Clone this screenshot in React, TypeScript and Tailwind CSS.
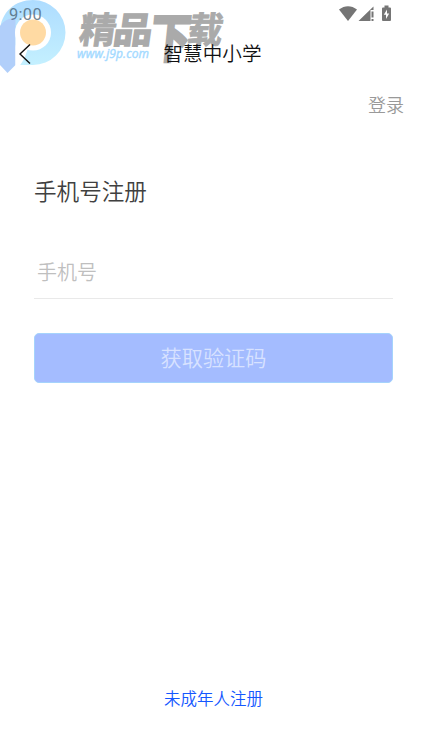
function Watermark() {
  return (
    <div className="pointer-events-none absolute left-0 top-0 h-20 w-60" aria-hidden="true">
      <svg className="h-20 w-60 overflow-visible" viewBox="0 0 240 80" fill="none">
        <defs>
          <linearGradient id="ring" x1="0" y1="0" x2="0" y2="1">
            <stop offset="0" stopColor="#aedcff" />
            <stop offset="1" stopColor="#c4f0ff" />
          </linearGradient>
        </defs>
        <path d="M0 31C1 12 15 0 33 0a32.500 32.500 0 0 1 0 65H19.500L15.500 45L0 58Z" fill="url(#ring)" />
        <path d="M0 26C4 20 10 18 15.500 18V65L7.500 73L0 65Z" fill="#b1cffa" />
        <circle cx="33" cy="32.500" r="18" fill="#fff" />
        <path d="M15.500 31V66H19.500C23.500 61 26 55 28 48Z" fill="#fff" />
        <circle cx="33" cy="32.500" r="13" fill="#ffdaa3" />
        <g fill="#aaa" stroke="#aaa" strokeWidth=".9" fontWeight="700" fontFamily="'Noto Sans CJK SC', sans-serif">
          <text transform="translate(78 43) skewX(-8) scale(1.020 1)" fontSize="36">精</text>
          <text transform="translate(112 43) skewX(-8) scale(1.090 1)" fontSize="36" strokeWidth="1.400">品</text>
          <text transform="translate(149 56.500) skewX(-6) scale(1.090 1.450)" fontSize="36" strokeWidth="2.200">下</text>
          <text transform="translate(186 43) skewX(-8) scale(.980 1)" fontSize="36">载</text>
        </g>
        <text x="77" y="58" fill="#a4daff" stroke="#a4daff" strokeWidth=".4" fontSize="12" fontWeight="500" fontStyle="italic" textLength="72" fontFamily="'Open Sans', sans-serif">
          www.j9p.com
        </text>
      </svg>
    </div>
  );
}

function StatusBar() {
  return (
    <div className="flex h-7 items-center justify-between pl-[9px] pr-8 text-[#757575]">
      <span className="relative z-10 pt-0.5 font-[Roboto] text-[16.500px] font-normal tracking-[0.3px] text-[#4b6578]/80">9:00</span>
      <svg className="h-5 w-[56px]" viewBox="0 0 56 20" fill="currentColor">
        <path d="M2 5.500C7.500 1 14.500 1 20 5.500L11 17Z" />
        <path d="M36.500 2.500V6H33.500V17H21.500ZM34.500 7.500h2v6h-2ZM34.500 15h2v2h-2Z" />
        <path fillRule="evenodd" d="M47.500 1.500h4v2h1.500q1 0 1 1V16q0 1-1 1h-7q-1 0-1-1V4.500q0-1 1-1h1.500ZM50 5.500l-3.200 5.200h2.200v4.300l3.200-5.500H50Z" />
      </svg>
    </div>
  );
}

export default function App() {
  return (
    <div className="relative flex h-[756px] w-[425px] flex-col overflow-hidden bg-white font-['Noto_Sans_CJK_SC',sans-serif] font-[350]">
      <Watermark />
      <StatusBar />
      <header className="relative flex h-[52px] items-center justify-center">
        <button className="absolute left-[18px] top-4" aria-label="返回">
          <svg className="h-5 w-[13px]" viewBox="0 0 13 20" fill="none" stroke="#111" strokeWidth="1.400">
            <path d="M12 .5L2 10L12 19.500" />
          </svg>
        </button>
        <h1 className="pb-0.5 text-[19.600px] leading-[50px] text-[#111]">智慧中小学</h1>
      </header>
      <div className="flex h-12 items-center justify-end pr-[21px]">
        <a href="#" className="text-lg text-[#999]">登录</a>
      </div>
      <main className="flex-1 pl-[34px] pr-8">
        <h2 className="mt-[47px] text-[22.600px] leading-8 text-[#404040]">手机号注册</h2>
        <div className="mt-[37px] h-[55px] w-[359px] border-b border-[#e9e9e9] pl-[3px] pt-3.5">
          <input
            type="tel"
            placeholder="手机号"
            className="block h-7 w-full bg-transparent text-[20px] outline-none placeholder:text-[#bfbfbf]"
          />
        </div>
        <button className="mt-[34px] flex h-[50px] w-[359px] items-center justify-center rounded-[5px] border border-[#a5d3fc] bg-[#a4bcff] pb-0.5 text-[21.200px] text-[#d8e2ff]">
          获取验证码
        </button>
      </main>
      <footer className="flex h-[116px] items-center justify-center pl-0.5">
        <a href="#" className="text-[16.500px] text-[#1457ff]">未成年人注册</a>
      </footer>
    </div>
  );
}
